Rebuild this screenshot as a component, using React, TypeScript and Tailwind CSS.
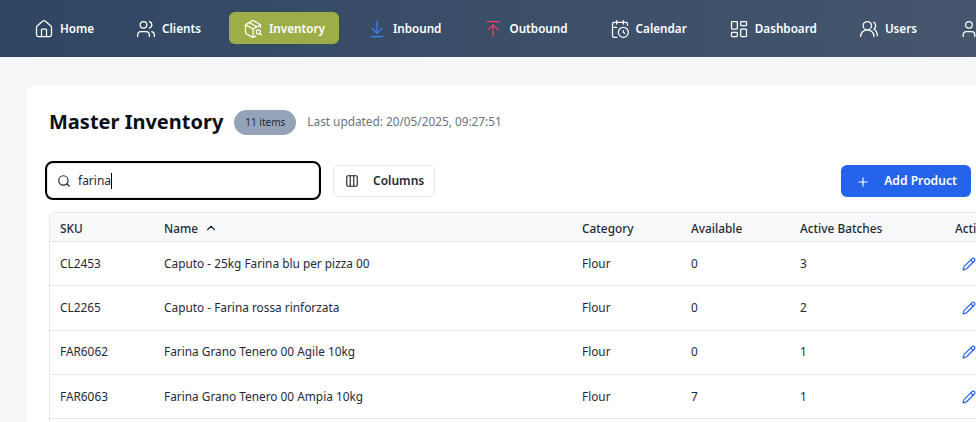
import { ArrowDownToLine, ArrowUpToLine, CalendarClock, ChevronUp, Columns3, Home, LayoutDashboard, PackageSearch, Pencil, Plus, Search, User, Users, UsersRound } from 'lucide-react';

const NAV_ITEMS = [
  { label: 'Home', icon: Home, iconClass: 'text-white' },
  { label: 'Clients', icon: Users, iconClass: 'text-white' },
  { label: 'Inventory', icon: PackageSearch, iconClass: 'text-white', active: true },
  { label: 'Inbound', icon: ArrowDownToLine, iconClass: 'text-[#3b82f6]' },
  { label: 'Outbound', icon: ArrowUpToLine, iconClass: 'text-[#f43f5e]' },
  { label: 'Calendar', icon: CalendarClock, iconClass: 'text-white' },
  { label: 'Dashboard', icon: LayoutDashboard, iconClass: 'text-white' },
  { label: 'Users', icon: UsersRound, iconClass: 'text-white' },
  { label: 'Profile', icon: User, iconClass: 'text-white' },
];

const ROWS = [
  { sku: 'CL2453', name: 'Caputo - 25kg Farina blu per pizza 00', category: 'Flour', available: 0, batches: 3 },
  { sku: 'CL2265', name: 'Caputo - Farina rossa rinforzata', category: 'Flour', available: 0, batches: 2 },
  { sku: 'FAR6062', name: 'Farina Grano Tenero 00 Agile 10kg', category: 'Flour', available: 0, batches: 1 },
  { sku: 'FAR6063', name: 'Farina Grano Tenero 00 Ampia 10kg', category: 'Flour', available: 7, batches: 1 },
  { sku: 'FAR6064', name: 'Farina Grano Tenero 00 Forte 10kg', category: 'Flour', available: 4, batches: 1 },
];

export default function App() {
  return (
    <div className="h-[422px] w-[976px] overflow-hidden bg-[#f5f6f7] font-['Noto_Sans',sans-serif]">
      <nav className="flex h-[57px] items-start gap-[14px] bg-gradient-to-r from-[#2f4663] to-[#45566d] pl-5 pt-3">
        {NAV_ITEMS.map(({ label, icon: Icon, iconClass, active }) => (
          <div
            key={label}
            className={`flex h-8 shrink-0 items-center gap-[6px] rounded-md px-[14px] pt-px text-[11.7px] font-semibold text-white ${active ? 'bg-[#9cae48]' : ''}`}
          >
            <Icon size={20} strokeWidth={1.5} className={iconClass} />
            {label}
          </div>
        ))}
      </nav>

      <main className="pl-[27px] pt-7">
        <div className="w-[966px] rounded-lg bg-white px-[22px] pt-[23px] pb-10">
          <div className="flex items-center">
            <h1 className="text-xl font-bold text-[#0b0f19]">Master Inventory</h1>
            <span className="ml-[11px] flex h-[25px] items-center rounded-full bg-[#94a3b8] px-[11px] text-[10px] text-[#1f2937]">11 items</span>
            <span className="ml-[11px] text-[11.8px] text-[#6b7280]">Last updated: 20/05/2025, 09:27:51</span>
          </div>

          <div className="mt-[25px] -ml-1 flex items-center">
            <div className="flex h-[39px] w-[276px] items-center gap-[7px] rounded-lg border-2 border-black pl-[10px] text-xs text-[#1f2937] shadow-[inset_0_0_0_1px_#e5e7eb]">
              <Search size={14} />
              <span className="flex items-center">farina<span className="h-4 w-px bg-black" /></span>
            </div>
            <button className="ml-3 flex h-8 items-center gap-[14px] rounded-md border border-[#e5e7eb] bg-white pl-[11px] pr-[10px] text-xs font-semibold text-[#1f2937]">
              <Columns3 size={14} />
              Columns
            </button>
            <button className="ml-auto flex h-8 items-center gap-[14px] rounded-md bg-[#2563eb] pl-[15px] pr-[14px] pt-[2px] text-[12.15px] font-semibold text-white">
              <Plus size={14} />
              Add Product
            </button>
          </div>

          <div className="-mr-[60px] mt-3 overflow-hidden rounded-t-md border border-b-0 border-[#e5e7eb]">
            <table className="w-full table-fixed text-[11.85px] text-[#1f2937]">
              <colgroup>
                <col className="w-[104px]" />
                <col className="w-[418px]" />
                <col className="w-[109px]" />
                <col className="w-[109px]" />
                <col className="w-[155px]" />
                <col />
              </colgroup>
              <thead className="bg-[#f8f9fb]">
                <tr className="h-[28.5px] border-b border-[#e5e7eb]">
                  <th className="px-[10px] pt-[3px] text-left font-medium">SKU</th>
                  <th className="px-[10px] pt-[3px] text-left font-medium">
                    <span className="flex items-center gap-[6px]">Name <ChevronUp size={14} /></span>
                  </th>
                  <th className="px-[10px] pt-[3px] text-left font-medium">Category</th>
                  <th className="px-[10px] pt-[3px] text-left font-medium">Available</th>
                  <th className="px-[10px] pt-[3px] text-left font-medium">Active Batches</th>
                  <th className="px-[10px] pt-[3px] text-left font-medium">Actions</th>
                </tr>
              </thead>
              <tbody>
                {ROWS.map((row) => (
                  <tr key={row.sku} className="h-[44.3px] border-b border-[#e5e7eb]">
                    <td className="px-[10px]">{row.sku}</td>
                    <td className="px-[10px]">{row.name}</td>
                    <td className="px-[10px]">{row.category}</td>
                    <td className="px-[10px]">{row.available}</td>
                    <td className="px-[10px]">{row.batches}</td>
                    <td className="px-[10px]">
                      <Pencil size={14} className="ml-[7px] text-[#2563eb]" />
                    </td>
                  </tr>
                ))}
              </tbody>
            </table>
          </div>
        </div>
      </main>
    </div>
  );
}
